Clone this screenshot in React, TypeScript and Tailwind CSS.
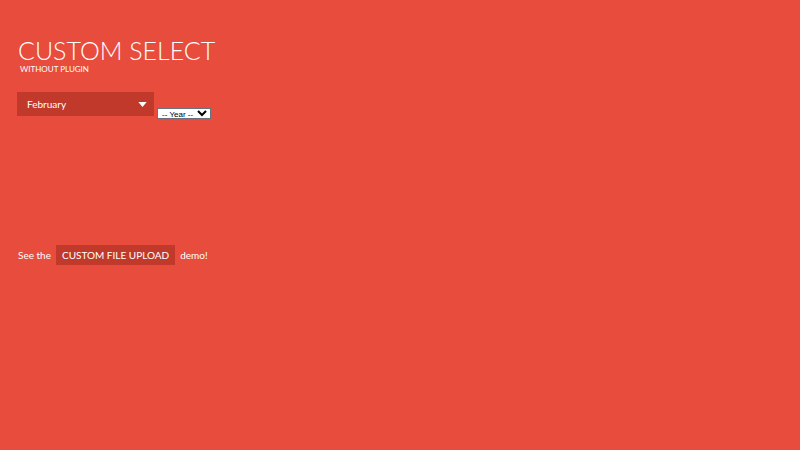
export default function App() {
  return (
    <div className="w-[800px] h-[450px] bg-[#e74c3c] text-white px-[18px] pt-[37px]" style={{ fontFamily: "Lato, 'Open Sans', sans-serif" }}>
      <h1 className="text-[25px] leading-[26px] font-light">CUSTOM SELECT</h1>
      <p className="text-[8px] leading-[9px] ml-[2px] mt-[2px]">WITHOUT PLUGIN</p>

      <div className="flex items-start mt-[18px]">
        <div className="w-[137px] h-[24px] bg-[#c0392b] flex items-center justify-between pl-[10px] pr-[6px] -ml-[1px]">
          <span className="text-[10px]">February</span>
          <svg width="9" height="5" viewBox="0 0 10 6" className="mr-[1px]">
            <path d="M0 0 L10 0 L5 6 Z" fill="#fff" />
          </svg>
        </div>
        <select
          className="ml-[3px] mt-[16px] h-[11px] text-[8px] leading-[8px] bg-white text-black border border-gray-500 px-0"
          style={{ fontFamily: "'Liberation Sans', Arial, sans-serif" }}
          defaultValue="year"
        >
          <option value="year">-- Year --</option>
        </select>
      </div>

      <div className="flex items-center mt-[126px] text-[10px]">
        <span>See the</span>
        <span className="ml-[5px] bg-[#c0392b] h-[20px] px-[6px] flex items-center">CUSTOM FILE UPLOAD</span>
        <span className="ml-[5px]">demo!</span>
      </div>
    </div>
  );
}
